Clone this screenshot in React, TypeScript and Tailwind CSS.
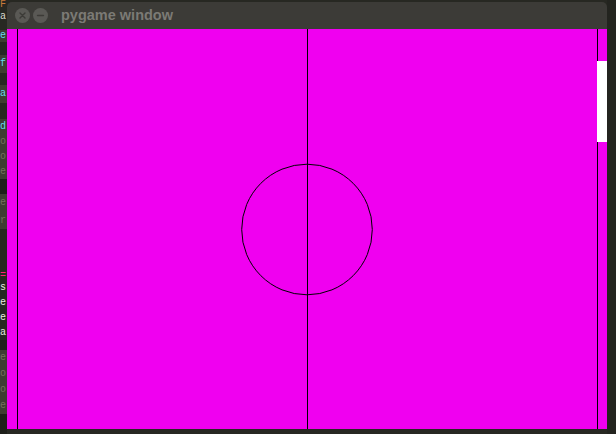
import { ReactNode } from 'react';

function Row({ h, bg, color, children }: { h: string; bg: string; color?: string; children?: ReactNode }) {
  return (
    <div className={`${h} ${bg} ${color ?? ''} flex items-center overflow-hidden whitespace-nowrap text-[10px] leading-none`}>
      {children}
    </div>
  );
}

// bits of the editor/terminal peeking out behind the window
function BehindStrip() {
  return (
    <div className="w-[7px] shrink-0 flex flex-col overflow-hidden bg-[#272822] font-['Liberation_Mono',monospace]">
      <Row h="h-[10px]" bg="bg-[#272822]" color="text-[#c87a3a]">F</Row>
      <Row h="h-[14px]" bg="bg-[#272822]" color="text-[#d8d8d0]">a</Row>
      <Row h="h-[6px]" bg="bg-[#272822]" />
      <Row h="h-[12px]" bg="bg-[#3e3d32]" color="text-[#66d9ef]">e</Row>
      <Row h="h-[13px]" bg="bg-[#272822]" />
      <Row h="h-[18px]" bg="bg-[#3e3d32]" color="text-[#66d9ef]">f</Row>
      <Row h="h-[12px]" bg="bg-[#272822]" />
      <Row h="h-[18px]" bg="bg-[#3e3d32]" color="text-[#66d9ef]">a</Row>
      <Row h="h-[17px]" bg="bg-[#272822]" />
      <Row h="h-[15px]" bg="bg-[#3e3d32]" color="text-[#66d9ef]">d</Row>
      <Row h="h-[15px]" bg="bg-[#3e3d32]" color="text-[#75715e]">o</Row>
      <Row h="h-[15px]" bg="bg-[#3e3d32]" color="text-[#75715e]">o</Row>
      <Row h="h-[15px]" bg="bg-[#3e3d32]" color="text-[#75715e]">e</Row>
      <Row h="h-[15px]" bg="bg-[#1e1f1a]" />
      <Row h="h-[18px]" bg="bg-[#3e3d32]" color="text-[#75715e]">e</Row>
      <Row h="h-[17px]" bg="bg-[#3e3d32]" color="text-[#75715e]">r</Row>
      <Row h="h-[42px]" bg="bg-[#272822]" />
      <Row h="h-[10px]" bg="bg-[#272822]" color="text-[#f92672]">=</Row>
      <Row h="h-[15px]" bg="bg-[#272822]" color="text-[#e8e8e0]">s</Row>
      <Row h="h-[15px]" bg="bg-[#272822]" color="text-[#e8e8e0]">e</Row>
      <Row h="h-[15px]" bg="bg-[#272822]" color="text-[#e8e8e0]">e</Row>
      <Row h="h-[15px]" bg="bg-[#272822]" color="text-[#e8e8e0]">a</Row>
      <Row h="h-[10px]" bg="bg-[#1e1f1a]" />
      <Row h="h-[16px]" bg="bg-[#3e3d32]" color="text-[#75715e]">e</Row>
      <Row h="h-[16px]" bg="bg-[#3e3d32]" color="text-[#75715e]">o</Row>
      <Row h="h-[16px]" bg="bg-[#3e3d32]" color="text-[#75715e]">o</Row>
      <Row h="h-[16px]" bg="bg-[#3e3d32]" color="text-[#75715e]">e</Row>
      <Row h="h-[20px]" bg="bg-[#1e1f1a]" />
    </div>
  );
}

function TitleButton({ kind }: { kind: 'close' | 'min' }) {
  return (
    <div className="w-[15px] h-[15px] rounded-full bg-[#5a5955] flex items-center justify-center">
      <svg width="9" height="9" viewBox="0 0 9 9">
        {kind === 'close' ? (
          <path d="M2 2L7 7M7 2L2 7" stroke="#3c3b37" strokeWidth="1.4" strokeLinecap="round" />
        ) : (
          <path d="M1.5 4.5H7.5" stroke="#3c3b37" strokeWidth="1.4" strokeLinecap="round" />
        )}
      </svg>
    </div>
  );
}

function Pitch() {
  return (
    <svg width="600" height="400" viewBox="0 0 600 400" className="block" shapeRendering="crispEdges">
      <rect x="0" y="0" width="600" height="400" fill="#f000f0" />
      <line x1="10.5" y1="0" x2="10.5" y2="400" stroke="#000" strokeWidth="1" />
      <line x1="590.5" y1="0" x2="590.5" y2="400" stroke="#000" strokeWidth="1" />
      <line x1="300.5" y1="0" x2="300.5" y2="400" stroke="#000" strokeWidth="1" />
      <circle cx="300" cy="200.5" r="65.3" fill="none" stroke="#000" strokeWidth="1" shapeRendering="geometricPrecision" />
      <rect x="590" y="32" width="10" height="81" fill="#ffffff" />
    </svg>
  );
}

export default function App() {
  return (
    <div className="w-[616px] h-[434px] flex bg-[#272822] overflow-hidden">
      <BehindStrip />
      <div className="w-[600px] shrink-0 flex flex-col">
        <div className="h-[2px] bg-[#272822]" />
        <div className="h-[27px] bg-[#3c3b37] rounded-t-[5px] flex items-center pl-[8px] gap-[3px]">
          <TitleButton kind="close" />
          <TitleButton kind="min" />
          <span className="ml-[10px] text-[14.5px] font-bold text-[#7b7a75] font-['Liberation_Sans',sans-serif] leading-none">
            pygame window
          </span>
        </div>
        <Pitch />
      </div>
      <div className="flex-1 bg-[#23241f]" />
    </div>
  );
}
